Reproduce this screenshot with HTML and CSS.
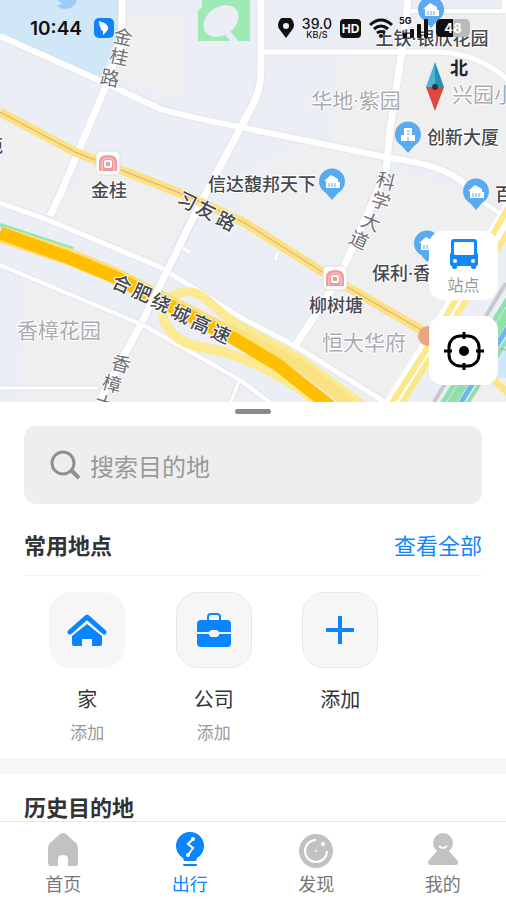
FILE: index.html
```
<!DOCTYPE html>
<html lang="zh-CN">
<head>
  <meta charset="UTF-8" />
  <meta name="viewport" content="width=device-width, initial-scale=1.0"/>
  <title>出行</title>
  <link rel="stylesheet" href="styles.css">
</head>
<body>

  <section class="map">
    <svg class="map-canvas" viewBox="0 0 506 402" preserveAspectRatio="xMidYMid slice">
      <defs>
        <g id="pin">
          <path d="M0 18 L-6 11 A13 13 0 1 1 6 11 Z" fill="#5aaaf0"/>
          <path d="M-8 -1 L-1 -7 L6 -3 V6 H-6 V-1 Z M4 0 H8 V6 H4 Z" fill="#fff"/>
          <path d="M-3 5 V1 M0 5 V1 M3 5 V1" stroke="#5aaaf0"/>
        </g>
        <g id="tower">
          <path d="M0 18 L-6 11 A13 13 0 1 1 6 11 Z" fill="#5aaaf0"/>
          <path d="M-4 -7 H4 V0 H7 V6 H-7 V0 H-4 Z" fill="#fff"/>
          <path d="M-1 -4 H2 M-1 -1 H2 M0 6 V2" stroke="#5aaaf0"/>
        </g>
        <g id="metro">
          <rect x="-12" y="-12" width="24" height="24" rx="5" fill="#fff" stroke="#ddd"/>
          <path d="M-9 8 V-1 Q-9 -8 0 -8 Q9 -8 9 -1 V8 Z" fill="#f19a9d"/>
          <path d="M-6 8 V0 Q-6 -5 0 -5 Q6 -5 6 0 V8" fill="none" stroke="#fbd5d5" stroke-width="1"/>
          <rect x="-3" y="-2" width="6" height="6" rx="1" fill="#f19a9d" stroke="#fff" stroke-width="2"/>
        </g>
      </defs>

      <!-- land -->
      <rect width="506" height="402" fill="#eceef6"/>
      <path d="M125 15 H185 V97 L112 80 L124 50 Z" fill="#efefef"/>
      <path d="M0 120 L72 155 L45 218 L0 200 Z" fill="#f0f0f0"/>
      <path d="M62 200 L90 165 L190 205 L160 265 L50 220 Z" fill="#efeff0"/>
      <path d="M340 55 H400 L390 155 L330 145 Z" fill="#efeff0"/>
      <path d="M405 12 H506 V205 L440 168 L390 156 Z" fill="#efeff0"/>
      <path d="M230 180 L300 142 L388 158 L385 175 L335 280 L250 225 Z" fill="#eeeff1"/>
      <path d="M400 170 L506 210 L430 330 L340 280 Z" fill="#efeff0"/>
      <path d="M25 280 L135 325 L100 402 H20 Z" fill="#efeff0"/>
      <path d="M145 328 L250 395 V402 H108 Z" fill="#efeff0"/>
      <path d="M335 290 L428 340 L390 400 L298 346 Z" fill="#efefef"/>
      <path d="M440 402 L506 290 V402 Z" fill="#efeff0"/>

      <!-- water and park -->
      <path d="M0 0 H120 V30 L101 80 L0 35 Z" fill="#cfe7f6"/>
      <path d="M57 0 H77 Q75 8 66 9 Q59 9 57 5 L63 4 Z" fill="#9fcbfa"/>
      <path d="M202 0 H250 V41 H198 V15 Q196 11 202 7 Z" fill="#9fe9b7"/>
      <ellipse cx="221" cy="21" rx="19" ry="14" transform="rotate(-35 221 21)" fill="#eceef6"/>
      <path d="M226 31 L236 43" stroke="#eceef6" stroke-width="6"/>

      <!-- river at the right -->
      <path d="M490 350 L506 335 V378 H490 Z" fill="#cfe7f6"/>
      <path d="M442 404 L512 292" stroke="#8fe0ab" stroke-width="5"/>
      <path d="M451 404 L516 300" stroke="#8fe0ab" stroke-width="9"/>
      <path d="M460 404 L518 311" stroke="#6db7ee" stroke-width="5"/>
      <path d="M467 404 L520 319" stroke="#8fe0ab" stroke-width="4"/>
      <path d="M434 402 L506 283" stroke="#c6c9d0" stroke-width="4"/>
      <path d="M487 374 L510 395" stroke="#fbe587" stroke-width="7"/>

      <!-- small streets -->
      <g class="streets">
        <path d="M0 36 L103 82 L160 109 Q180 115 240 127 L390 158 Q445 165 466 185" stroke-width="6"/>
        <path d="M122 0 V40 L105 88 L60 195 L50 216" stroke-width="7"/>
        <path d="M261 0 V70 Q261 92 250 110 L196 212 L142 322 L98 404" stroke-width="7"/>
        <path d="M264 52 H440 Q480 54 508 80" stroke-width="5"/>
        <path d="M408 0 L402 50 L390 130 L386 172 L338 280 L295 346" stroke-width="7"/>
        <path d="M410 11 H506 M504 0 V11" stroke-width="4"/>
        <path d="M0 203 L48 220 L160 267 L240 317 L297 347 L388 404" stroke-width="5"/>
        <path d="M0 265 L143 325 L240 380 L272 404" stroke-width="4"/>
        <path d="M0 388 H98 M239 381 L231 402 M182 247 L190 253 M278 252 L275 260 M230 155 L226 150 M243 223 L246 217" stroke-width="3"/>
        <path d="M480 200 L510 220" stroke-width="4"/>
      </g>

      <!-- main roads -->
      <g fill="none">
        <path d="M0 112 L75 152 L190 197 L245 223 L335 280 L430 335" stroke="#fce181" stroke-width="9"/>
        <path d="M0 112 L75 152 L190 197 L245 223 L335 280 L430 335 L506 350" stroke="#e3a27a"/>
        <path d="M392 406 L436 336 L512 208" stroke="#fff" stroke-width="18"/>
        <path d="M390 406 L432 341 L508 208" stroke="#fbe88a" stroke-width="6"/>
        <path d="M400 406 L441 341 L514 222" stroke="#fbe88a" stroke-width="6"/>
        <path d="M0 225 L73 249" stroke="#8ee6b5" stroke-width="4"/>
        <path d="M163 313 C163 328 178 343 200 347 C225 351 247 358 275 374 Q298 386 320 404" stroke="#fbea91" stroke-width="10"/>
        <path d="M163 315 C163 298 178 290 192 292 C205 295 216 309 229 319 C252 335 285 348 310 366 L364 406" stroke="#fbea91" stroke-width="9"/>
        <path d="M230 331 L300 365 L350 404" stroke="#fbe280" stroke-width="12"/>
        <path d="M0 234 L67 256 L113 275 L233 336" stroke="#fbe07a" stroke-width="17"/>
        <path d="M0 233 L67 257 L113 276 L233 338 L278 365 L330 406" stroke="#ffbe00" stroke-width="13" stroke-linejoin="round"/>
      </g>
      <path class="streets" d="M196 212 L142 322" stroke-width="7"/>
      <circle cx="428" cy="336" r="10" fill="#eaa583"/>

      <use href="#pin" x="431" y="10"/>
      <use href="#tower" x="408" y="135"/>
      <use href="#pin" x="332" y="182"/>
      <use href="#pin" x="476" y="192"/>
      <use href="#pin" x="427" y="244"/>
      <use href="#metro" x="108" y="163"/>
      <use href="#metro" x="335" y="278"/>

      <g class="label area">
        <text x="356" y="108">华地·紫园</text>
        <text x="452" y="102" text-anchor="start">兴园小区</text>
        <text x="59" y="338">香樟花园</text>
        <text x="364" y="350">恒大华府</text>
      </g>
      <g class="label place">
        <text x="432" y="45">上铁·银欣花园</text>
        <text x="463" y="144">创新大厦</text>
        <text x="262" y="191">信达馥邦天下</text>
        <text x="109" y="197">金桂</text>
        <text x="336" y="312">柳树塘</text>
        <text x="372" y="280" text-anchor="start">保利·香</text>
        <text x="495" y="201" text-anchor="start">百</text>
        <text x="-15" y="152" text-anchor="start">苑</text>
      </g>
      <g class="label street">
        <text transform="translate(123 37) rotate(12)" y="7">金</text>
        <text transform="translate(119 57) rotate(12)" y="7">桂</text>
        <text transform="translate(110 78) rotate(12)" y="7">路</text>
        <text transform="translate(386 181) rotate(15)" y="7">科</text>
        <text transform="translate(381 201) rotate(18)" y="7">学</text>
        <text transform="translate(371 222) rotate(22)" y="7">大</text>
        <text transform="translate(359 240) rotate(25)" y="7">道</text>
        <text transform="translate(121 364) rotate(16)" y="7">香</text>
        <text transform="translate(112 384) rotate(16)" y="7">樟</text>
        <text transform="translate(104 404) rotate(16)" y="7">大</text>
      </g>
      <g class="label road">
        <text transform="translate(187 201) rotate(26)" y="7">习</text>
        <text transform="translate(206 210) rotate(26)" y="7">友</text>
        <text transform="translate(226 221) rotate(26)" y="7">路</text>
        <text transform="translate(122 284) rotate(24)" y="7">合</text>
        <text transform="translate(142 293) rotate(24)" y="7">肥</text>
        <text transform="translate(161 303) rotate(24)" y="7">绕</text>
        <text transform="translate(181 314) rotate(24)" y="7">城</text>
        <text transform="translate(201 324) rotate(24)" y="7">高</text>
        <text transform="translate(221 334) rotate(24)" y="7">速</text>
      </g>

      <!-- compass -->
      <path d="M435 62 L426 87 H435 Z" fill="#49b4d6"/>
      <path d="M435 62 L444 87 H435 Z" fill="#2592b3"/>
      <path d="M426 87 H444 L435 111 Z" fill="#e2463f"/>
      <circle cx="435" cy="87" r="3" fill="#333"/>
      <text class="north" x="450" y="75">北</text>
    </svg>

    <div class="status-bar">
      <span class="time">10:44</span>
      <svg width="20" height="20" viewBox="0 0 20 20">
        <rect width="20" height="20" rx="5" fill="#1283f7"/>
        <path d="M5 3 Q13 5 14 9 Q15 11 12 14 L9 17 L9 13 Q6 12 7 10 Q5 8 5 3 Z" fill="#fff"/>
      </svg>
      <div class="status-icons">
        <svg width="16" height="20" viewBox="0 0 16 20">
          <path d="M8 20 L2 12 A8 8 0 1 1 14 12 Z" fill="#111"/>
          <circle cx="8" cy="8" r="3" fill="#eceef6"/>
        </svg>
        <span class="speed"><b>39.0</b><small>KB/S</small></span>
        <span class="hd">HD</span>
        <svg width="24" height="20" viewBox="0 0 24 20" fill="none" stroke="#111" stroke-width="3">
          <path d="M1 7 Q12 -3 23 7"/>
          <path d="M5 11 Q12 5 19 11"/>
          <path d="M8 15 Q12 12 16 15"/>
          <circle cx="12" cy="18" r="2" fill="#111" stroke="none"/>
        </svg>
        <span class="signal">
          <small>5G</small>
          <svg width="27" height="20" viewBox="0 0 27 20" fill="#111">
            <rect x="2" y="15" width="4" height="5" rx="1"/>
            <rect x="9" y="11" width="4" height="9" rx="1"/>
            <rect x="16" y="6" width="4" height="14" rx="1"/>
            <rect x="23" y="1" width="4" height="19" rx="1"/>
          </svg>
        </span>
        <span class="battery">48</span>
      </div>
    </div>

    <div class="map-buttons">
      <button type="button">
        <svg width="30" height="32" viewBox="0 0 30 32">
          <path d="M5 1 H25 Q28 1 28 4 V15 Q29 15 29 17 V26 Q29 28 27 28 V30 Q27 31 25 31 H24 Q22 31 22 29 V28 H8 V29 Q8 31 6 31 H5 Q3 31 3 29 V28 Q1 28 1 26 V17 Q1 15 2 15 V4 Q2 1 5 1 Z" fill="#1287f8"/>
          <rect x="5" y="4" width="20" height="13" rx="1" fill="#fff"/>
          <circle cx="6" cy="23" r="2" fill="#fff"/>
          <circle cx="24" cy="23" r="2" fill="#fff"/>
        </svg>
        <span>站点</span>
      </button>
      <button type="button" aria-label="定位">
        <svg width="42" height="38" viewBox="0 0 42 38" fill="none" stroke="#000" stroke-width="3">
          <rect x="6" y="4" width="30" height="30" rx="11"/>
          <path d="M21 0 V7 M21 31 V38 M1 19 H9 M33 19 H41"/>
          <circle cx="21" cy="19" r="5" fill="#000" stroke="none"/>
        </svg>
      </button>
    </div>
  </section>

  <main class="sheet">
    <div class="handle"></div>

    <label class="search">
      <svg width="30" height="30" viewBox="0 0 30 30" fill="none" stroke="#8f8f8f" stroke-width="3">
        <circle cx="13" cy="13" r="11"/>
        <path d="M21 20 L29 28" stroke-width="4"/>
      </svg>
      <input type="text" placeholder="搜索目的地" aria-label="搜索目的地">
    </label>

    <div class="section-header">
      <h2>常用地点</h2>
      <a href="#">查看全部</a>
    </div>

    <div class="places">
      <button type="button" class="place-item">
        <span class="tile plain">
          <svg width="40" height="34" viewBox="0 0 40 34">
            <path d="M3 19 L20 4 L37 19" fill="none" stroke="#0a84ff" stroke-width="5" stroke-linecap="round" stroke-linejoin="round"/>
            <path d="M20 11 L35 23 V31 Q35 33 33 33 H25 V26 H15 V33 H7 Q5 33 5 31 V23 Z" fill="#0a84ff"/>
          </svg>
        </span>
        <span class="name">家</span>
        <span class="sub">添加</span>
      </button>
      <button type="button" class="place-item">
        <span class="tile">
          <svg width="36" height="36" viewBox="0 0 36 36">
            <path d="M12 9 V5 Q12 2 15 2 H21 Q24 2 24 5 V9" fill="none" stroke="#0a84ff" stroke-width="2"/>
            <rect x="1" y="8" width="34" height="27" rx="4" fill="#0a84ff"/>
            <path d="M1 21 H35" stroke="#f6f6f6" stroke-width="2"/>
            <rect x="13" y="18" width="10" height="7" rx="3" fill="#f6f6f6"/>
          </svg>
        </span>
        <span class="name">公司</span>
        <span class="sub">添加</span>
      </button>
      <button type="button" class="place-item">
        <span class="tile">
          <svg width="30" height="30" viewBox="0 0 30 30" stroke="#0a84ff" stroke-width="4">
            <path d="M15 1 V29 M1 15 H29"/>
          </svg>
        </span>
        <span class="name">添加</span>
      </button>
    </div>

    <div class="history">
      <h2>历史目的地</h2>
    </div>
  </main>

  <nav class="tab-bar">
    <a href="#">
      <svg width="36" height="36" viewBox="0 0 36 36" fill="#c2c2c2">
        <path d="M15 2 Q18 0 21 2 L31 11 Q33 13 33 16 V31 Q33 34 30 34 H23 V27 Q23 23 18 23 Q13 23 13 27 V34 H6 Q3 34 3 31 V16 Q3 13 5 11 Z"/>
      </svg>
      <span>首页</span>
    </a>
    <a href="#" class="active">
      <svg width="36" height="36" viewBox="0 0 36 36">
        <path d="M12 29 L11 26 A14 14 0 1 1 25 26 L24 29 Z" fill="#0a84ff"/>
        <path d="M12 33 H24" stroke="#0a84ff" stroke-width="2" stroke-linecap="round"/>
        <path d="M21 7 L16 12 L21 16 L16 23" fill="none" stroke="#fff" stroke-width="2"/>
        <g fill="#fff"><circle cx="21" cy="7" r="2"/><circle cx="16" cy="12" r="1"/><circle cx="21" cy="16" r="1"/><circle cx="16" cy="23" r="2"/></g>
      </svg>
      <span>出行</span>
    </a>
    <a href="#">
      <svg width="36" height="36" viewBox="0 0 36 36">
        <circle cx="18" cy="19" r="17" fill="#c2c2c2"/>
        <path d="M18 8 A11 11 0 1 0 29 19" fill="none" stroke="#fff" stroke-width="2"/>
        <circle cx="25" cy="12" r="2" fill="#fff"/>
        <circle cx="18" cy="19" r="1" fill="#fff"/>
      </svg>
      <span>发现</span>
    </a>
    <a href="#">
      <svg width="36" height="36" viewBox="0 0 36 36">
        <path d="M13 18 H23 L32 28 Q35 33 30 33 H6 Q1 33 4 28 Z" fill="#c2c2c2"/>
        <circle cx="18" cy="11" r="10" fill="#c2c2c2"/>
        <path d="M14 14 Q18 18 22 14" fill="none" stroke="#fff" stroke-width="2"/>
      </svg>
      <span>我的</span>
    </a>
  </nav>

</body>
</html>
```
FILE: styles.css
```
* {
  box-sizing: border-box;
}

body {
  display: flex;
  flex-direction: column;
  height: 100vh;
  margin: 0;
  background-color: #fff;
  color: #333;
  font-family: "Noto Sans CJK SC", sans-serif;
}

a {
  color: #1287f8;
  text-decoration: none;
}

button {
  padding: 0;
  border: none;
  background: none;
  color: inherit;
  font-family: inherit;
  cursor: pointer;
}

svg {
  display: block;
  flex-shrink: 0;
}

h2 {
  margin: 0;
  font-size: 22px;
  line-height: 32px;
  font-weight: 700;
}

/* map */
.map {
  position: relative;
  flex-shrink: 0;
  height: 402px;
  overflow: hidden;
}

.map-canvas {
  width: 100%;
  height: 100%;
}

.streets {
  fill: none;
  stroke: #fff;
  stroke-linejoin: round;
  filter: drop-shadow(0 0 1px #d8dae2);
}

.label {
  font-family: Roboto, "Noto Sans CJK SC", sans-serif;
}

.label text {
  text-anchor: middle;
  paint-order: stroke;
  stroke: #fff;
  stroke-width: 2px;
  stroke-linejoin: round;
}

.label text[text-anchor="start"] {
  text-anchor: start;
}

.area {
  font-size: 21px;
  fill: #aaabaf;
}

.place {
  font-size: 18px;
  font-weight: 500;
  fill: #46494f;
}

.street {
  font-size: 19px;
  fill: #707277;
}

.road {
  font-size: 19px;
  font-weight: 500;
  fill: #44474d;
}

.north {
  font-size: 18px;
  font-weight: 700;
  fill: #222;
}

.status-bar {
  position: absolute;
  top: 14px;
  left: 30px;
  right: 36px;
  display: flex;
  align-items: center;
  gap: 12px;
  height: 28px;
  color: #111;
  font-family: Inter, sans-serif;
}

.time {
  font-size: 19px;
  font-weight: 600;
}

.status-icons {
  display: flex;
  align-items: center;
  gap: 8px;
  margin-left: auto;
}

.speed {
  display: flex;
  flex-direction: column;
  align-items: center;
  font-size: 14px;
  line-height: 12px;
}

.speed b {
  font-weight: 500;
}

.speed small {
  font-size: 9px;
  line-height: 9px;
  font-weight: 500;
}

.hd {
  width: 21px;
  border-radius: 4px;
  background-color: #111;
  color: #fff;
  font-size: 12px;
  line-height: 19px;
  font-weight: 700;
  text-align: center;
}

.signal {
  position: relative;
}

.signal small {
  position: absolute;
  top: -2px;
  left: -2px;
  font-size: 9px;
  line-height: 9px;
  font-weight: 700;
}

.battery {
  width: 34px;
  border-radius: 5px;
  background: linear-gradient(to right, #111 50%, #b9babd 50%);
  color: #fff;
  font-size: 13px;
  line-height: 18px;
  font-weight: 700;
  text-align: center;
}

.map-buttons {
  position: absolute;
  right: 8px;
  bottom: 17px;
  display: flex;
  flex-direction: column;
  gap: 16px;
}

.map-buttons button {
  display: flex;
  flex-direction: column;
  align-items: center;
  justify-content: center;
  gap: 4px;
  width: 69px;
  height: 69px;
  border-radius: 14px;
  background-color: #fff;
  color: #999;
  font-size: 16px;
  line-height: 20px;
}

/* bottom sheet */
.sheet {
  flex: 1;
  min-height: 0;
  overflow: hidden;
}

.handle {
  width: 36px;
  height: 5px;
  margin: 7px auto 12px;
  border-radius: 3px;
  background-color: #8a8a8a;
}

.search {
  display: flex;
  align-items: center;
  gap: 10px;
  height: 78px;
  margin: 0 24px;
  padding: 0 26px;
  border-radius: 12px;
  background-color: #eee;
}

.search input {
  flex: 1;
  min-width: 0;
  padding: 0;
  border: none;
  outline: none;
  background: none;
  color: #333;
  font-family: inherit;
  font-size: 24px;
}

.search input::placeholder {
  color: #999;
}

.section-header {
  display: flex;
  justify-content: space-between;
  align-items: center;
  margin: 0 24px;
  padding: 24px 0 15px;
  border-bottom: 1px solid #f0f0f0;
}

.section-header a {
  font-size: 22px;
  line-height: 32px;
}

.places {
  display: grid;
  grid-template-columns: repeat(4, 1fr);
  height: 182px;
  margin-right: -24px;
  padding: 16px 0 0 24px;
}

.place-item {
  display: flex;
  flex-direction: column;
  align-items: center;
}

.tile {
  display: flex;
  align-items: center;
  justify-content: center;
  width: 76px;
  height: 76px;
  border: 1px solid #e8e8e8;
  border-radius: 22px;
  background-color: #f6f6f6;
}

.tile.plain {
  border-color: #f6f6f6;
}

.name {
  margin-top: 16px;
  font-size: 20px;
  line-height: 30px;
}

.sub {
  margin-top: 6px;
  color: #999;
  font-size: 17px;
  line-height: 24px;
}

.history {
  padding: 16px 24px;
  border-top: 16px solid #f6f6f6;
}

/* tab bar */
.tab-bar {
  display: grid;
  grid-template-columns: repeat(4, 1fr);
  flex-shrink: 0;
  height: 79px;
  padding-top: 10px;
  border-top: 1px solid #e8e8e8;
  background-color: #fff;
}

.tab-bar a {
  display: flex;
  flex-direction: column;
  align-items: center;
  gap: 2px;
  color: #777;
  font-size: 18px;
  line-height: 26px;
}

.tab-bar .active {
  color: #0a84ff;
}
```
